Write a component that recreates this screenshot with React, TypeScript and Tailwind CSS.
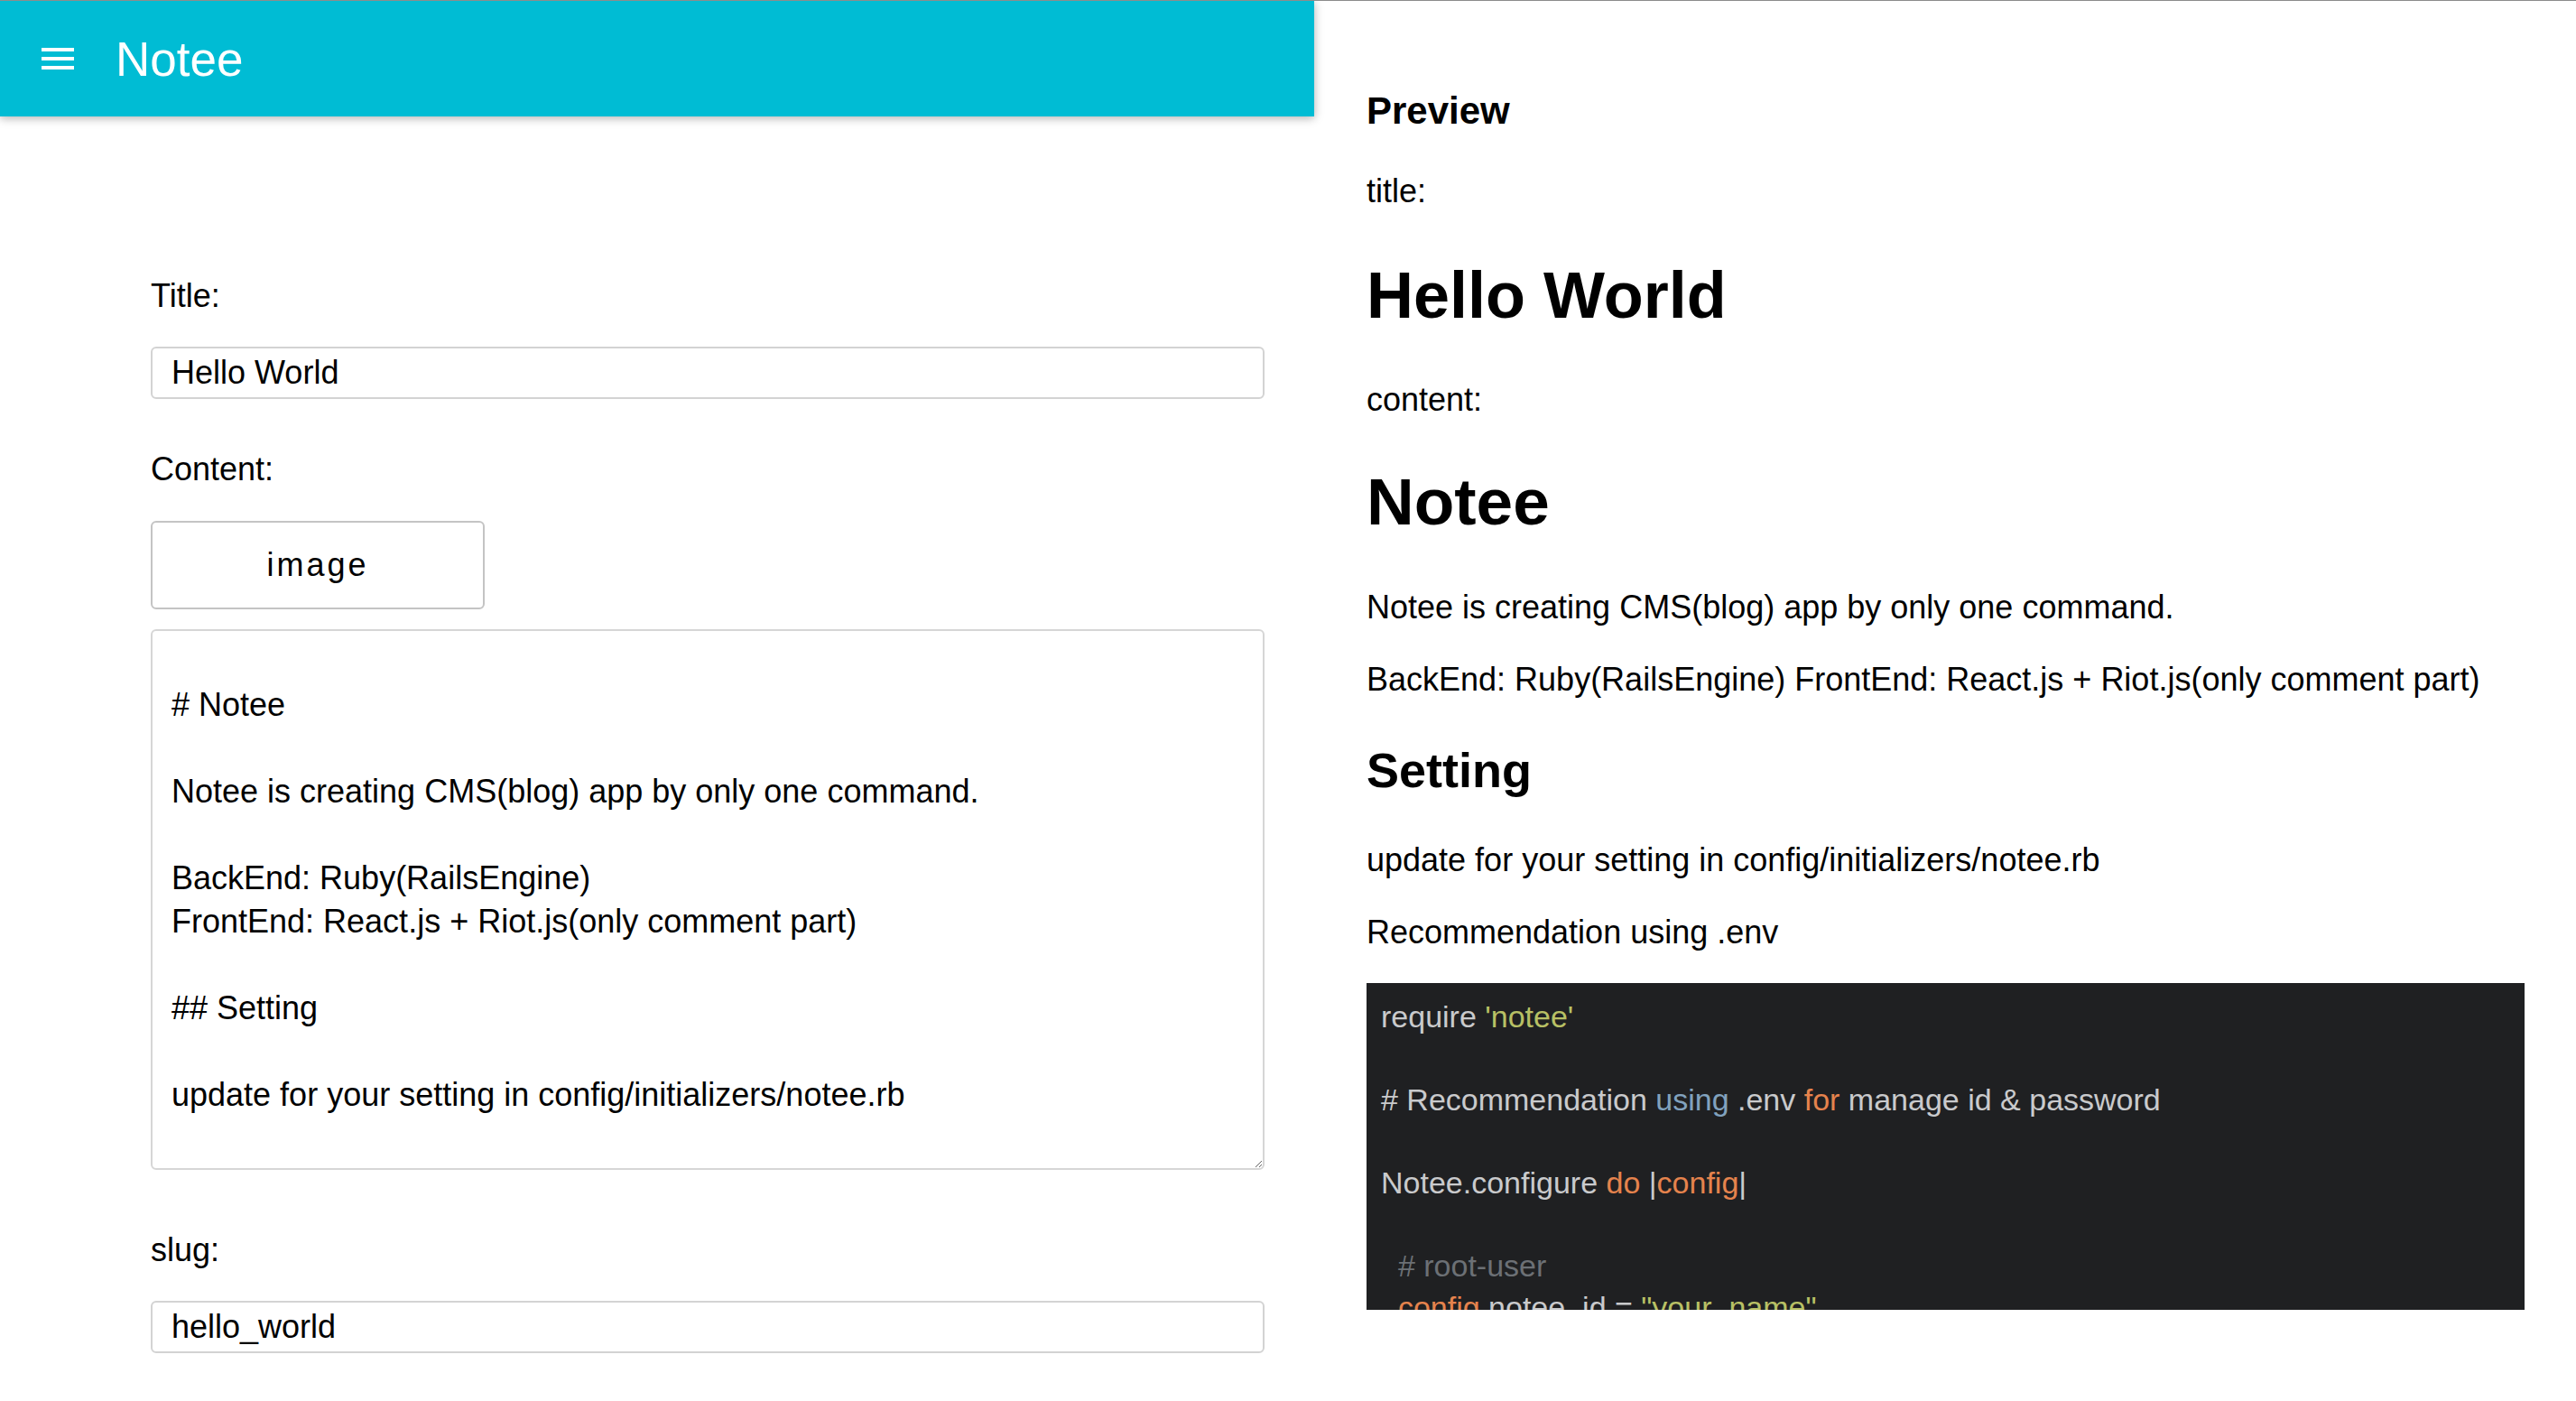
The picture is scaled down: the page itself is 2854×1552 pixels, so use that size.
import { useState } from 'react'

const textareaValue = `
# Notee

Notee is creating CMS(blog) app by only one command.

BackEnd: Ruby(RailsEngine)
FrontEnd: React.js + Riot.js(only comment part)

## Setting

update for your setting in config/initializers/notee.rb
`

function MenuIcon() {
  return (
    <svg width="48" height="48" viewBox="0 0 24 24" fill="#ffffff">
      <path d="M3 18h18v-2H3v2zm0-5h18v-2H3v2zm0-7v2h18V6H3z" />
    </svg>
  )
}

function Label({ children }: { children: React.ReactNode }) {
  return <div className="h-[48px] leading-[48px] text-[36px] text-black">{children}</div>
}

function TextInput({ value }: { value: string }) {
  const [v, setV] = useState(value)
  return (
    <input
      value={v}
      onChange={(e) => setV(e.target.value)}
      className="block w-full h-[58px] px-[21px] border-2 border-[#d3d3d3] rounded-[6px] text-[36px] text-black outline-none bg-white"
    />
  )
}

function EditorPane() {
  const [content, setContent] = useState(textareaValue)
  return (
    <div className="w-[1456px] shrink-0 flex flex-col">
      {/* App bar */}
      <div className="h-[128px] shrink-0 bg-[#00bcd4] flex items-center pl-[40px] shadow-[0_2px_12px_rgba(0,0,0,0.16),0_2px_8px_rgba(0,0,0,0.16)] relative z-10">
        <MenuIcon />
        <span className="ml-[40px] text-[53px] text-white leading-none">Notee</span>
      </div>

      {/* Form */}
      <div className="ml-[167px] w-[1234px] pt-[175px]">
        <Label>Title:</Label>
        <div className="mt-[32px]">
          <TextInput value="Hello World" />
        </div>

        <div className="mt-[54px]">
          <Label>Content:</Label>
        </div>
        <button className="mt-[33px] block w-[370px] h-[98px] border-2 border-[#c4c4c4] rounded-[6px] bg-white text-[36px] tracking-[3px] text-black">
          image
        </button>
        <textarea
          value={content}
          onChange={(e) => setContent(e.target.value)}
          className="mt-[22px] block w-full h-[599px] pt-[10px] px-[21px] border-2 border-[#d6d6d6] rounded-[6px] text-[36px] leading-[48px] text-black outline-none resize-y"
        />

        <div className="mt-[65px]">
          <Label>slug:</Label>
        </div>
        <div className="mt-[32px]">
          <TextInput value="hello_world" />
        </div>
      </div>
    </div>
  )
}

function PreviewPane() {
  return (
    <div className="flex-1 min-w-0 pl-[58px] pr-[57px] pt-[98px] text-black">
      <h3 className="h-[48px] leading-[48px] text-[42px] font-bold">Preview</h3>
      <p className="mt-[41px] h-[48px] leading-[48px] text-[36px]">title:</p>
      <h1 className="mt-[51px] h-[80px] leading-[80px] text-[72px] font-bold">Hello World</h1>
      <p className="mt-[52px] h-[48px] leading-[48px] text-[36px]">content:</p>
      <h1 className="mt-[49px] h-[80px] leading-[80px] text-[73px] font-bold">Notee</h1>
      <p className="mt-[53px] h-[48px] leading-[48px] text-[36px]">Notee is creating CMS(blog) app by only one command.</p>
      <p className="mt-[32px] h-[48px] leading-[48px] text-[36px]">
        BackEnd: Ruby(RailsEngine) FrontEnd: React.js + Riot.js(only comment part)
      </p>
      <h2 className="mt-[44px] h-[64px] leading-[64px] text-[54px] font-bold">Setting</h2>
      <p className="mt-[44px] h-[48px] leading-[48px] text-[36px]">update for your setting in config/initializers/notee.rb</p>
      <p className="mt-[32px] h-[48px] leading-[48px] text-[36px]">Recommendation using .env</p>

      {/* Code block */}
      <pre className="mt-[32px] h-[362px] overflow-hidden bg-[#1f2022] pt-[14px] px-[16px] text-[34px] leading-[46px] text-[#c9cacc] font-['Liberation_Sans',Arial,sans-serif] whitespace-pre">
        <div>
          require <span className="text-[#b8c065]">'notee'</span>
        </div>
        <div>&nbsp;</div>
        <div>
          # Recommendation <span className="text-[#81a2be]">using</span> .env{' '}
          <span className="text-[#e5834d]">for</span> manage id &amp; password
        </div>
        <div>&nbsp;</div>
        <div>
          Notee.configure <span className="text-[#e5834d]">do</span> |<span className="text-[#e5834d]">config</span>|
        </div>
        <div>&nbsp;</div>
        <div className="text-[#6c7075]">{'  # root-user'}</div>
        <div>
          {'  '}
          <span className="text-[#e5834d]">config</span>.notee_id = <span className="text-[#b8c065]">"your_name"</span>
        </div>
        <div>
          {'  '}
          <span className="text-[#e5834d]">config</span>.notee_password = <span className="text-[#b8c065]">"your_password"</span>
        </div>
      </pre>
    </div>
  )
}

export default function App() {
  return (
    <div className="w-full h-[1552px] overflow-hidden bg-white border-t border-[#8c8c8c] flex font-['Liberation_Sans',Arial,sans-serif]">
      <EditorPane />
      <PreviewPane />
    </div>
  )
}
